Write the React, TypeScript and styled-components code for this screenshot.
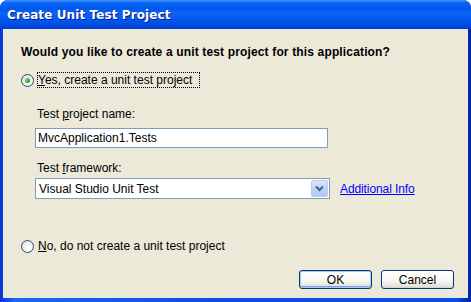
import React, { FC } from 'react'
import styled, { createGlobalStyle } from 'styled-components'

const GlobalStyle = createGlobalStyle`
  html, body {
    margin: 0;
    padding: 0;
    background: #ffffff;
  }
  body {
    font-family: 'Liberation Sans', Arial, sans-serif;
  }
`

const Window = styled.div`
  width: 471px;
  height: 302px;
  display: flex;
  flex-direction: column;
  background: linear-gradient(to right, #0831d9 0%, #166aee 3%, #0a4ce0 50%, #0a4ce0 97%, #0021a5 100%);
  border-radius: 8px 8px 0 0;
  overflow: hidden;
`

const TitleBar = styled.div`
  height: 29px;
  flex-shrink: 0;
  display: flex;
  align-items: center;
  padding: 0 7px;
  background: linear-gradient(
    to bottom,
    #3d95ff 0%,
    #0a66f5 10%,
    #0058ee 30%,
    #0c63f3 45%,
    #0058ee 70%,
    #0048dc 90%,
    #003dd7 100%
  );
  color: #ffffff;
  font-family: 'DejaVu Sans', 'Liberation Sans', sans-serif;
  font-weight: bold;
  font-size: 12px;
  letter-spacing: 0.1px;
  text-shadow: 1px 1px 0 #0a1883;
`

const Body = styled.div`
  flex: 1;
  margin: 0 3px 4px 3px;
  background: #ece9d8;
  padding: 16px 0 0 18px;
  display: flex;
  flex-direction: column;
  font-size: 12px;
  color: #000000;
`

const Question = styled.div`
  font-weight: bold;
  font-size: 12px;
  line-height: 14px;
  letter-spacing: 0.15px;
`

const RadioRow = styled.div<{ gap: number }>`
  display: flex;
  align-items: center;
  margin-top: ${({ gap }) => gap}px;
  height: 16px;
`

const RadioCircle = styled.span<{ checked?: boolean }>`
  width: 11px;
  height: 11px;
  border-radius: 50%;
  border: 1px solid #1c5180;
  background: radial-gradient(circle at 65% 65%, #ffffff 0%, #f2f2ec 45%, #d6d3c9 100%);
  display: flex;
  align-items: center;
  justify-content: center;
  flex-shrink: 0;

  &::after {
    content: '';
    display: ${({ checked }) => (checked ? 'block' : 'none')};
    width: 5px;
    height: 5px;
    border-radius: 50%;
    background: radial-gradient(circle at 35% 35%, #7be17b 0%, #2fa12f 60%, #1b7f1b 100%);
  }
`

const RadioLabel = styled.span<{ focused?: boolean }>`
  margin-left: 3px;
  padding: 0 7px 0 0;
  line-height: 14px;
  border: 1px dotted ${({ focused }) => (focused ? '#000000' : 'transparent')};
`

const Underline = styled.span`
  text-decoration: underline;
`

const Options = styled.div`
  display: flex;
  flex-direction: column;
  padding-left: 14px;
`

const FieldLabel = styled.div<{ top: number }>`
  margin-top: ${({ top }) => top}px;
  line-height: 14px;
  padding-left: 2px;
`

const TextBox = styled.div`
  margin-top: 7px;
  width: 289px;
  height: 18px;
  border: 1px solid #7f9db9;
  background: #ffffff;
  display: flex;
  align-items: center;
  padding-left: 2px;
`

const SelectRow = styled.div`
  margin-top: 3px;
  display: flex;
  align-items: center;
`

const SelectBox = styled.div`
  width: 290px;
  height: 19px;
  border: 1px solid #7f9db9;
  background: #ffffff;
  display: flex;
  align-items: center;
  justify-content: space-between;
  padding-left: 3px;
`

const DropButton = styled.div`
  width: 15px;
  height: 15px;
  margin-right: 1px;
  border: 1px solid #bbcaf1;
  border-radius: 2px;
  background: linear-gradient(to bottom, #dbe5fc 0%, #c1d3fb 50%, #b4c8f6 100%);
  display: flex;
  align-items: center;
  justify-content: center;
`

const LinkText = styled.a`
  margin-left: 10px;
  color: #0000ff;
  text-decoration: underline;
  cursor: pointer;
  letter-spacing: -0.1px;
`

const Footer = styled.div`
  margin-top: auto;
  display: flex;
  justify-content: flex-end;
  gap: 9px;
  padding: 0 14px 9px 0;
`

const Button = styled.button<{ isDefault?: boolean }>`
  width: 73px;
  height: 19px;
  font-family: 'Liberation Sans', Arial, sans-serif;
  font-size: 12px;
  color: #000000;
  border: 1px solid #003c74;
  border-radius: 3px;
  padding: 0;
  background: linear-gradient(to bottom, #ffffff 0%, #f6f6f2 60%, #e3e2dc 90%, #d6d0c5 100%);
  box-shadow: ${({ isDefault }) =>
    isDefault ? 'inset 0 0 0 1px #a9c6f4, inset 0 -1px 0 1px #7aa2e5' : 'none'};
`

const Chevron: FC = () => (
  <svg width="9" height="7" viewBox="0 0 9 7">
    <path d="M1 1.5 L4.5 5 L8 1.5" fill="none" stroke="#4d6185" strokeWidth="2" />
  </svg>
)

const App: FC = () => {
  return (
    <Window>
      <GlobalStyle />
      <TitleBar>Create Unit Test Project</TitleBar>
      <Body>
        <Question>Would you like to create a unit test project for this application?</Question>
        <RadioRow gap={13}>
          <RadioCircle checked />
          <RadioLabel focused>
            <Underline>Y</Underline>es, create a unit test project
          </RadioLabel>
        </RadioRow>
        <Options>
          <FieldLabel top={19}>
            Test <Underline>p</Underline>roject name:
          </FieldLabel>
          <TextBox>MvcApplication1.Tests</TextBox>
          <FieldLabel top={13}>
            Test <Underline>f</Underline>ramework:
          </FieldLabel>
          <SelectRow>
            <SelectBox>
              Visual Studio Unit Test
              <DropButton>
                <Chevron />
              </DropButton>
            </SelectBox>
            <LinkText>Additional Info</LinkText>
          </SelectRow>
        </Options>
        <RadioRow gap={39}>
          <RadioCircle />
          <RadioLabel>
            <Underline>N</Underline>o, do not create a unit test project
          </RadioLabel>
        </RadioRow>
        <Footer>
          <Button isDefault>OK</Button>
          <Button>Cancel</Button>
        </Footer>
      </Body>
    </Window>
  )
}

export default App
